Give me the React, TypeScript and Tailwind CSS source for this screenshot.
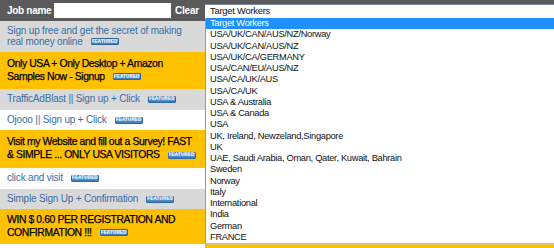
import React from 'react'

type Row = { text: string[]; tone: 'gray' | 'white' | 'gold'; h: string }

const rows: Row[] = [
  { text: ['Sign up free and get the secret of making', 'real money online'], tone: 'gray', h: 'h-[31px]' },
  { text: ['Only USA + Only Desktop + Amazon', 'Samples Now - Signup'], tone: 'gold', h: 'h-[37px]' },
  { text: ['TrafficAdBlast || Sign up + Click'], tone: 'gray', h: 'h-[21px]' },
  { text: ['Ojooo || Sign up + Click'], tone: 'white', h: 'h-[20px]' },
  { text: ['Visit my Website and fill out a Survey! FAST', '& SIMPLE ... ONLY USA VISITORS'], tone: 'gold', h: 'h-[38px]' },
  { text: ['click and visit'], tone: 'white', h: 'h-[21px]' },
  { text: ['Simple Sign Up + Confirmation'], tone: 'gray', h: 'h-[20px]' },
  { text: ['WIN $ 0.60 PER REGISTRATION AND', 'CONFIRMATION !!!'], tone: 'gold', h: 'h-[35px]' },
]

const options = [
  'Target Workers',
  'USA/UK/CAN/AUS/NZ/Norway',
  'USA/UK/CAN/AUS/NZ',
  'USA/UK/CA/GERMANY',
  'USA/CAN/EU/AUS/NZ',
  'USA/CA/UK/AUS',
  'USA/CA/UK',
  'USA & Australia',
  'USA & Canada',
  'USA',
  'UK, Ireland, Newzeland,Singapore',
  'UK',
  'UAE, Saudi Arabia, Oman, Qater, Kuwait, Bahrain',
  'Sweden',
  'Norway',
  'Italy',
  'International',
  'India',
  'German',
  'FRANCE',
]

function Featured() {
  return (
    <span className="ml-[8px] inline-flex h-[7px] w-[28px] items-center justify-center rounded-[1px] border border-[#2d679f] bg-gradient-to-b from-[#78b0e4] to-[#3a7dc0] align-middle text-[4.5px] font-bold leading-none tracking-[0.2px] text-white">
      FEATURED
    </span>
  )
}

function Offer({ row }: { row: Row }) {
  const gold = row.tone === 'gold'
  const bg = gold ? 'bg-[#ffc000]' : row.tone === 'gray' ? 'bg-[#d9d9d9]' : 'bg-white'
  const txt = gold
    ? 'text-[10.4px] leading-[12.7px] tracking-[-0.4px] text-black'
    : 'text-[10px] leading-[10.5px] tracking-[-0.2px] text-[#3b6ea6]'
  return (
    <div className={`flex ${row.h} items-center ${bg} pl-[7px]`}>
      <div className={txt}>
        {row.text.map((t, i) => (
          <div key={i} className="whitespace-nowrap">
            <span className={gold ? '[-webkit-text-stroke:0.25px_#000]' : ''}>{t}</span>
            {i === row.text.length - 1 && <Featured />}
          </div>
        ))}
      </div>
    </div>
  )
}

export default function App() {
  return (
    <div className="flex h-[248px] w-[554px] overflow-hidden bg-white font-['Liberation_Sans',Arial,sans-serif]">
      <div className="w-[205px] shrink-0">
        <div className="flex h-[21px] items-center bg-[#5a5a5a] pl-[7px] text-[10px] font-bold text-white">
          <span className="w-[47px] tracking-[-0.3px]">Job name</span>
          <div className="h-[15px] w-[117px] bg-white" />
          <span className="ml-[4px] tracking-[-0.2px]">Clear</span>
        </div>
        {rows.map((r, i) => (
          <Offer key={i} row={r} />
        ))}
      </div>
      <div className="flex flex-1 flex-col">
        <div className="h-[4px] bg-[#5a5a5a]" />
        <div className="flex h-[14px] items-center border-t border-[#7a8aa0] bg-white pl-[5px] text-[9.3px] tracking-[-0.2px] text-[#111]">
          Target Workers
        </div>
        <div className="border-b-2 border-l border-[#e6c25a] border-l-[#9a9a9a] bg-white">
          {options.map((o, i) => (
            <div
              key={i}
              className={`h-[11.25px] whitespace-nowrap pl-[4px] text-[9.3px] leading-[11.25px] tracking-[-0.3px] ${
                i === 0 ? 'bg-[#1e90ff] text-white' : 'text-[#111]'
              }`}
            >
              {o}
            </div>
          ))}
        </div>
        <div className="flex-1 bg-[#ffc000]" />
      </div>
    </div>
  )
}
